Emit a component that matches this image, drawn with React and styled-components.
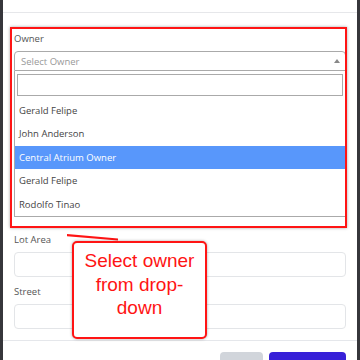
import React from 'react';
import styled, { createGlobalStyle } from 'styled-components';

const Global = createGlobalStyle`
  html, body { margin: 0; padding: 0; background: #36363b; }
  body { width: 360px; height: 360px; overflow: hidden; font-family: "Open Sans", "Noto Sans", sans-serif; }
  * { box-sizing: border-box; }
`;

const Stage = styled.div`
  position: relative;
  width: 360px;
  height: 360px;
  overflow: hidden;
  background: #36363b;
  display: flex;
`;

const Modal = styled.div`
  margin-left: 3px;
  width: 354px;
  height: 360px;
  background: #fff;
  display: flex;
  flex-direction: column;
`;

const Header = styled.div`
  flex: none;
  height: 13px;
  border-bottom: 1px solid #e6e7ea;
`;

const Body = styled.div`
  padding: 19px 11px 11px 11px;
  display: flex;
  flex-direction: column;
`;

const Field = styled.div`
  display: flex;
  flex-direction: column;
  margin-top: ${p => p.$mt || 0}px;
`;

const Label = styled.label`
  font-size: 9.5px;
  line-height: 13px;
  height: 13px;
  color: #555;
  margin-bottom: 6px;
`;

const Selection = styled.div`
  height: 20px;
  border: 1px solid #aaa;
  border-radius: 4px 4px 0 0;
  display: flex;
  align-items: center;
  justify-content: space-between;
  padding: 0 5px 0 6px;
  font-size: 9.5px;
  color: #999;
`;

const Caret = styled.span`
  width: 0;
  height: 0;
  border-left: 3px solid transparent;
  border-right: 3px solid transparent;
  border-bottom: 4px solid #888;
`;

const Dropdown = styled.div`
  border: 1px solid #aaa;
  border-top: none;
  background: #fff;
  display: flex;
  flex-direction: column;
`;

const SearchWrap = styled.div`
  padding: 3px 2px;
`;

const Search = styled.div`
  height: 22px;
  border: 1px solid #aaa;
`;

const Option = styled.div`
  height: 23.4px;
  line-height: 23.4px;
  padding-left: 4px;
  font-size: 9.5px;
  color: ${p => (p.$active ? '#fff' : '#444')};
  background: ${p => (p.$active ? '#5897fb' : '#fff')};
`;

const Input = styled.div`
  height: 25px;
  border: 1px solid #e3e5e8;
  border-radius: 4px;
`;

const Footer = styled.div`
  border-top: 1px solid #e5e7eb;
  padding: 11px 11px 0;
  display: flex;
  justify-content: flex-end;
  gap: 6px;
`;

const Button = styled.div`
  height: 30px;
  width: ${p => p.$w}px;
  border-radius: 4px;
  background: ${p => (p.$primary ? '#3720d8' : '#d1d5db')};
`;

const Highlight = styled.div`
  position: absolute;
  left: 10px;
  top: 27px;
  width: 337px;
  height: 201px;
  border: 2px solid #ff1414;
  box-shadow: 0 0 3px rgba(0, 0, 0, 0.35);
  pointer-events: none;
`;

const Callout = styled.div`
  position: absolute;
  left: 72px;
  top: 241px;
  width: 135px;
  height: 98px;
  border: 2px solid #ff1414;
  border-radius: 5px;
  background: #fff;
  box-shadow: 0 0 3px rgba(0, 0, 0, 0.35);
  padding-top: 6px;
  text-align: center;
  font-family: "Liberation Sans", Arial, sans-serif;
  font-size: 19px;
  line-height: 23.5px;
  color: #ff1414;
`;

const Pointer = styled.svg`
  position: absolute;
  left: 0;
  top: 0;
  pointer-events: none;
`;

const owners = ['Gerald Felipe', 'John Anderson', 'Central Atrium Owner', 'Gerald Felipe', 'Rodolfo Tinao'];

export default function App() {
  return (
    <Stage>
      <Global />
      <Modal>
        <Header />
        <Body>
          <Field>
            <Label>Owner</Label>
            <Selection>
              <span>Select Owner</span>
              <Caret />
            </Selection>
            <Dropdown>
              <SearchWrap>
                <Search />
              </SearchWrap>
              {owners.map((o, i) => (
                <Option key={i} $active={i === 2}>{o}</Option>
              ))}
            </Dropdown>
          </Field>
          <Field $mt={16}>
            <Label>Lot Area</Label>
            <Input />
          </Field>
          <Field $mt={8}>
            <Label>Street</Label>
            <Input />
          </Field>
        </Body>
        <Footer>
          <Button $w={43} />
          <Button $w={77} $primary />
        </Footer>
      </Modal>
      <Highlight />
      <Pointer width="360" height="360">
        <polygon points="67,234 118,238.5 118,240.5 67,236.2" fill="#ff1414" />
      </Pointer>
      <Callout>
        Select owner<br />from drop-<br />down
      </Callout>
    </Stage>
  );
}
